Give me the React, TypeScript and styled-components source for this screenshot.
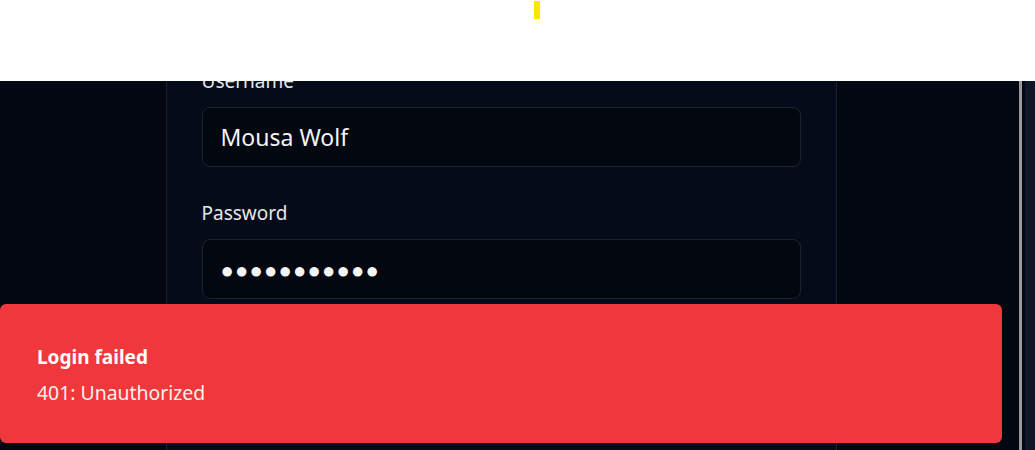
import React from "react";
import styled, { createGlobalStyle } from "styled-components";

const GlobalStyle = createGlobalStyle`
  html, body { margin: 0; padding: 0; }
  body {
    background: #030712;
    font-family: "Noto Sans", "Open Sans", sans-serif;
    overflow: hidden;
  }
`;

const Header = styled.header`
  position: fixed;
  top: 0;
  left: 0;
  right: 0;
  height: 81px;
  background: #ffffff;
  z-index: 10;
  display: flex;
  align-items: flex-start;
`;

const Marker = styled.span`
  display: block;
  width: 6px;
  height: 18px;
  margin: 1px 0 0 534px;
  background: #ffe500;
`;

const Shell = styled.div`
  display: grid;
  grid-template-columns: 1002px 17px 16px;
  height: 100vh;
`;

const Main = styled.main`
  display: flex;
  justify-content: center;
  padding-top: 20px;
`;

const Gutter = styled.div`
  background: #030712;
`;

const Rail = styled.div`
  display: grid;
  grid-template-columns: 3px 3px 1fr;
`;

const RailPart = styled.div<{ $tone: string }>`
  background: ${(p) => p.$tone};
`;

const Card = styled.section`
  width: 671px;
  box-sizing: border-box;
  background: #050b19;
  border: 1px solid #1a2130;
  border-bottom: none;
  padding: 46px 35px 0;
  display: flex;
  flex-direction: column;
`;

const Field = styled.div`
  display: flex;
  flex-direction: column;
  gap: 12px;
  margin-bottom: 32px;
`;

const Label = styled.label`
  font-size: 19px;
  line-height: 28px;
  color: #e5e7eb;
`;

const Input = styled.input<{ $dots?: boolean }>`
  box-sizing: border-box;
  height: 60px;
  width: 100%;
  border: 1px solid #1c2330;
  border-radius: 8px;
  background: #030710;
  color: #f3f4f6;
  font-family: "Noto Sans", sans-serif;
  font-size: ${(p) => (p.$dots ? "22px" : "23px")};
  letter-spacing: ${(p) => (p.$dots ? "1.2px" : "0")};
  padding: 0 18px;
  outline: none;
`;

const Toast = styled.div`
  position: fixed;
  left: 0;
  top: 304px;
  width: 1002px;
  height: 139px;
  box-sizing: border-box;
  background: #ef383b;
  border-radius: 6px;
  padding: 41px 37px 0;
  display: flex;
  flex-direction: column;
  gap: 10px;
  z-index: 20;
  color: #ffffff;
`;

const ToastTitle = styled.div`
  font-size: 19px;
  line-height: 25px;
  font-weight: 700;
`;

const ToastText = styled.div`
  font-size: 19.4px;
  line-height: 25px;
  opacity: 0.92;
`;

export default function App() {
  return (
    <>
      <GlobalStyle />
      <Header>
        <Marker />
      </Header>
      <Shell>
        <Main>
          <Card>
            <Field>
              <Label>Username</Label>
              <Input readOnly value="Mousa Wolf" />
            </Field>
            <Field>
              <Label>Password</Label>
              <Input readOnly $dots value={"●●●●●●●●●●●"} />
            </Field>
          </Card>
        </Main>
        <Gutter />
        <Rail>
          <RailPart $tone="#9a9a9a" />
          <RailPart $tone="#030712" />
          <RailPart $tone="#0f1626" />
        </Rail>
      </Shell>
      <Toast>
        <ToastTitle>Login failed</ToastTitle>
        <ToastText>401: Unauthorized</ToastText>
      </Toast>
    </>
  );
}
